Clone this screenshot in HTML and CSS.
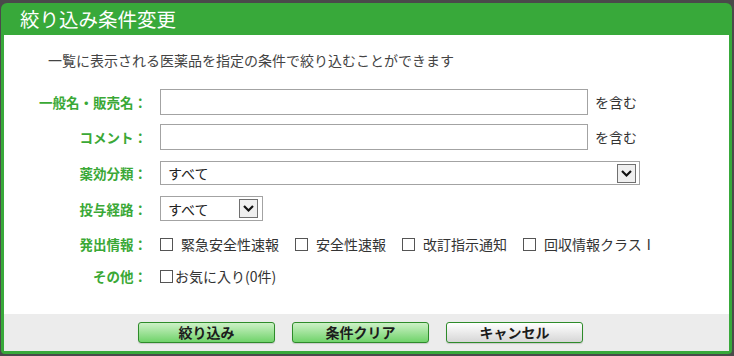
FILE: index.html
```html
<!DOCTYPE html>
<html lang="ja">
<head>
    <meta charset="UTF-8">
    <meta name="viewport" content="width=device-width, initial-scale=1.0">
    <title>絞り込み条件変更</title>
    <link rel="stylesheet" href="styles.css">
</head>
<body>
    <div class="dialog">
        <div class="dialog-title">絞り込み条件変更</div>
        <div class="dialog-body">
            <p class="lead">一覧に表示される医薬品を指定の条件で絞り込むことができます</p>

            <div class="row row-text row-gap-m">
                <label class="row-label">一般名・販売名：</label>
                <input type="text" class="text-input">
                <span class="suffix">を含む</span>
            </div>
            <div class="row row-text">
                <label class="row-label">コメント：</label>
                <input type="text" class="text-input">
                <span class="suffix">を含む</span>
            </div>
            <div class="row row-select">
                <label class="row-label">薬効分類：</label>
                <div class="select select-wide">
                    <span>すべて</span>
                    <span class="select-btn"><svg width="13" height="9" viewBox="0 0 13 9"><path d="M2 2 L6.5 6.5 L11 2" fill="none" stroke="#111" stroke-width="2.2"/></svg></span>
                </div>
            </div>
            <div class="row row-select2">
                <label class="row-label">投与経路：</label>
                <div class="select select-short">
                    <span>すべて</span>
                    <span class="select-btn"><svg width="13" height="9" viewBox="0 0 13 9"><path d="M2 2 L6.5 6.5 L11 2" fill="none" stroke="#111" stroke-width="2.2"/></svg></span>
                </div>
            </div>
            <div class="row row-check row-gap-s">
                <label class="row-label">発出情報：</label>
                <label class="check-item"><input type="checkbox" class="check">緊急安全性速報</label>
                <label class="check-item"><input type="checkbox" class="check">安全性速報</label>
                <label class="check-item"><input type="checkbox" class="check">改訂指示通知</label>
                <label class="check-item"><input type="checkbox" class="check">回収情報クラスⅠ</label>
            </div>
            <div class="row row-check">
                <label class="row-label">その他：</label>
                <label class="check-item tight"><input type="checkbox" class="check">お気に入り(0件)</label>
            </div>
        </div>
        <div class="dialog-footer">
            <button class="btn btn-green">絞り込み</button>
            <button class="btn btn-green">条件クリア</button>
            <button class="btn btn-white">キャンセル</button>
        </div>
    </div>
</body>
</html>
```

FILE: styles.css
```css
body {
    margin: 0;
    background-color: #4a4a4a;
    font-family: "Noto Sans CJK JP", "Noto Sans", sans-serif;
    color: #333;
}
.dialog {
    margin: 3px 0 0 1px;
    width: 731px;
    height: 351px;
    box-sizing: border-box;
    padding: 0 3px 3px 3px;
    background-color: #38a93a;
    border-radius: 6px 6px 4px 4px;
    display: flex;
    flex-direction: column;
}
.dialog-title {
    height: 32px;
    line-height: 32px;
    padding-left: 16px;
    font-size: 19.5px;
    color: #fff;
}
.dialog-body {
    height: 279px;
    box-sizing: border-box;
    background-color: #fff;
    padding-top: 15px;
}
.lead {
    margin: 0 0 19px 44px;
    font-size: 14px;
    line-height: 20px;
    color: #444;
}
.row {
    display: flex;
    align-items: center;
    margin-bottom: 11px;
}
.row-gap-m { margin-bottom: 9px; }
.row-gap-s { margin-bottom: 8px; }
.row-text { height: 26px; }
.row-select { height: 24px; }
.row-select2 { height: 25px; }
.row-check { height: 24px; }
.row-label {
    width: 156px;
    box-sizing: border-box;
    padding-right: 13px;
    text-align: right;
    font-size: 13.5px;
    font-weight: bold;
    color: #3aa836;
    white-space: nowrap;
}
.text-input {
    width: 428px;
    height: 26px;
    box-sizing: border-box;
    margin: 0;
    border: 1px solid #a3a3a3;
    background: #fff;
}
.suffix {
    margin-left: 7px;
    font-size: 14px;
    color: #333;
}
.select {
    box-sizing: border-box;
    border: 1px solid #a3a3a3;
    background: #fff;
    display: flex;
    align-items: center;
    justify-content: space-between;
    padding: 0 3px 0 7px;
    font-size: 14px;
    color: #222;
}
.select-wide {
    width: 480px;
    height: 24px;
}
.select-short {
    width: 103px;
    height: 25px;
    padding-right: 4px;
}
.select-btn {
    width: 19px;
    height: 19px;
    box-sizing: border-box;
    border: 1px solid #707070;
    background: #efefef;
    display: flex;
    align-items: center;
    justify-content: center;
}
.check-item {
    display: flex;
    align-items: center;
    margin-right: 16px;
    font-size: 14px;
    color: #333;
}
.check {
    appearance: none;
    width: 13px;
    height: 13px;
    margin: 0 8px 0 0;
    border: 1px solid #555;
    background: #fff;
}
.tight .check {
    margin-right: 2px;
}
.dialog-footer {
    flex: 1;
    background-color: #ececec;
    display: flex;
    align-items: flex-start;
    gap: 17px;
    padding: 8px 0 0 134px;
}
.btn {
    width: 137px;
    height: 21px;
    margin: 0;
    padding: 0;
    border: 1px solid #2e8b2a;
    border-radius: 3px;
    font-family: "Noto Sans CJK JP", sans-serif;
    font-size: 14px;
    font-weight: bold;
    line-height: 19px;
    color: #1c1c1c;
    box-shadow: 0 1px 1px rgba(0, 0, 0, 0.15);
}
.btn-green {
    background: linear-gradient(#cdf1c7, #70d36a);
}
.btn-white {
    background: linear-gradient(#ffffff, #d6d6d6);
}
```
